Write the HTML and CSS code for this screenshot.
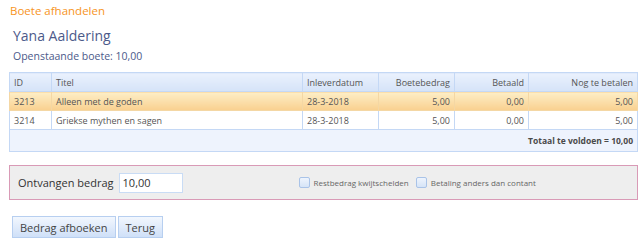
FILE: index.html
```html
<!DOCTYPE html>
<html lang="nl">
<head>
    <meta charset="UTF-8">
    <title>Boete afhandelen</title>
    <link rel="stylesheet" href="styles.css">
</head>
<body>
    <div class="page">
        <div class="page-title">Boete afhandelen</div>
        <h1 class="member">Yana Aaldering</h1>
        <div class="open-fine">Openstaande boete: 10,00</div>

        <table class="grid">
            <thead>
                <tr>
                    <th class="c-id">ID</th>
                    <th class="c-title">Titel</th>
                    <th class="c-date">Inleverdatum</th>
                    <th class="c-num">Boetebedrag</th>
                    <th class="c-paid">Betaald</th>
                    <th class="c-rest">Nog te betalen</th>
                </tr>
            </thead>
            <tbody>
                <tr class="selected">
                    <td>3213</td>
                    <td>Alleen met de goden</td>
                    <td>28-3-2018</td>
                    <td class="num">5,00</td>
                    <td class="num">0,00</td>
                    <td class="num">5,00</td>
                </tr>
                <tr>
                    <td>3214</td>
                    <td>Griekse mythen en sagen</td>
                    <td>28-3-2018</td>
                    <td class="num">5,00</td>
                    <td class="num">0,00</td>
                    <td class="num">5,00</td>
                </tr>
            </tbody>
            <tfoot>
                <tr>
                    <td colspan="6">Totaal te voldoen = 10,00</td>
                </tr>
            </tfoot>
        </table>

        <div class="payment">
            <label class="amount">Ontvangen bedrag <input type="text" value="10,00"></label>
            <div class="options">
                <label class="check"><span class="box"></span>Restbedrag kwijtschelden</label>
                <label class="check"><span class="box"></span>Betaling anders dan contant</label>
            </div>
        </div>

        <div class="actions">
            <button type="button" class="btn-book">Bedrag afboeken</button>
            <button type="button" class="btn-back">Terug</button>
        </div>
    </div>
</body>
</html>
```

FILE: styles.css
```css
body {
    margin: 0;
    background-color: #fff;
    font-family: 'Open Sans', 'Noto Sans', sans-serif;
    color: #555;
}

.page {
    padding: 3px 3px 0 9px;
}

.page-title {
    color: #f7941d;
    font-size: 11.5px;
    line-height: 16px;
    padding-left: 1px;
}

.member {
    margin: 8px 0 0 4px;
    font-size: 14px;
    font-weight: normal;
    line-height: 18px;
    color: #4c5a8a;
}

.open-fine {
    margin: 4px 0 0 4px;
    font-size: 10.5px;
    line-height: 14px;
    color: #4c5a8a;
}

.grid {
    margin-top: 9px;
    width: 629px;
    border-collapse: collapse;
    border: 1px solid #b9d0f2;
    font-size: 9px;
    table-layout: fixed;
}

.grid th,
.grid td {
    height: 18px;
    padding: 0 4px;
    border: 1px solid #c4d8f5;
    text-align: left;
    font-weight: normal;
    white-space: nowrap;
    overflow: hidden;
}

.grid thead th {
    background: linear-gradient(#eaf1fd, #d5e3f8);
    color: #555;
}

.grid th.c-id { width: 33px; }
.grid th.c-title { width: 242px; }
.grid th.c-date { width: 67px; }
.grid th.c-num { width: 67px; text-align: right; }
.grid th.c-paid { width: 65px; text-align: right; }
.grid th.c-rest { text-align: right; }

.grid td.num {
    text-align: right;
}

.grid tr.selected td {
    background: linear-gradient(#fdeec6, #f9d08f);
    border-color: #f4d7a4;
}

.grid tfoot td {
    height: 21px;
    background-color: #eef3fd;
    text-align: right;
    font-weight: bold;
    font-size: 8.5px;
    color: #4a4a4a;
}

.payment {
    margin-top: 13px;
    width: 627px;
    height: 33px;
    border: 1px solid #d99ab6;
    background-color: #eeeeee;
    display: flex;
    align-items: center;
}

.amount {
    margin-left: 8px;
    font-size: 11px;
    color: #333;
    display: flex;
    align-items: center;
    gap: 5px;
}

.amount input {
    width: 56px;
    height: 16px;
    padding: 1px 3px;
    border: 1px solid #c9dcf5;
    font-family: inherit;
    font-size: 11px;
    color: #333;
}

.options {
    margin-left: 116px;
    display: flex;
    gap: 7px;
}

.check {
    display: flex;
    align-items: center;
    font-size: 8px;
    color: #666;
}

.box {
    width: 9px;
    height: 9px;
    margin-right: 4px;
    border: 1px solid #a9c3e8;
    border-radius: 2px;
    background: linear-gradient(#eef4fd, #d6e4f7);
}

.actions {
    margin-top: 16px;
    display: flex;
    gap: 2px;
    padding-left: 3px;
}

.actions button {
    height: 22px;
    padding: 0 7px;
    border: 1px solid #b7cff0;
    background: linear-gradient(#f2f7fe, #cfe0f8);
    font-family: inherit;
    font-size: 11px;
    color: #444;
}
```
